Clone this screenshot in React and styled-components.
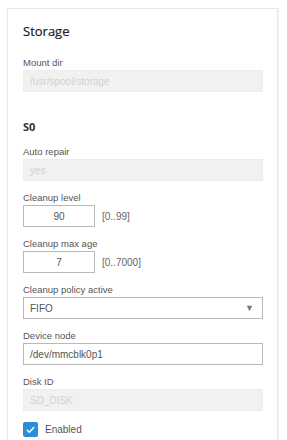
import React from 'react';
import styled, { createGlobalStyle } from 'styled-components';

const GlobalStyle = createGlobalStyle`
  body {
    margin: 0;
    background: #fff;
    font-family: "Liberation Sans", Arial, sans-serif;
  }
`;

const Page = styled.div`
  padding: 8px 9px 0 7px;
  height: 440px;
  box-sizing: border-box;
  overflow: hidden;
`;

const Card = styled.div`
  border: 1px solid #e6e6e6;
  border-bottom: none;
  box-shadow: 1px 0 0 #f2f2f2;
  padding: 13px 14px 0 15px;
  min-height: 440px;
  box-sizing: border-box;
`;

const Title = styled.h2`
  margin: 0 0 17px;
  font-family: "Open Sans", "Liberation Sans", sans-serif;
  font-size: 13px;
  font-weight: 400;
  line-height: 18px;
  color: #222;
  -webkit-text-stroke: 0.2px #222;
`;

const Section = styled.h3`
  margin: 28px 0 12px;
  font-family: "Open Sans", "Liberation Sans", sans-serif;
  font-size: 11px;
  font-weight: 700;
  line-height: 14px;
  color: #333;
`;

const Field = styled.div`
  margin-bottom: 11px;
`;

const Label = styled.div`
  font-size: 9.5px;
  line-height: 12px;
  color: #555;
  margin-bottom: 1px;
`;

const Row = styled.div`
  display: flex;
  align-items: center;
  gap: 7px;
`;

const Box = styled.div`
  height: 22px;
  box-sizing: border-box;
  width: ${p => (p.$short ? '72px' : '240px')};
  border: 1px solid ${p => (p.$disabled ? '#ececec' : '#b9b9b9')};
  background: ${p => (p.$disabled ? '#f1f1f1' : '#fff')};
  color: ${p => (p.$disabled ? '#d2d2d2' : '#555')};
  font-size: 10px;
  display: flex;
  align-items: center;
  justify-content: ${p => (p.$short ? 'center' : 'space-between')};
  padding: 0 ${p => (p.$short ? '0' : '6px')};
`;

const Range = styled.span`
  font-size: 10px;
  color: #666;
`;

const Arrow = styled.span`
  font-size: 9px;
  color: #777;
  margin-right: 2px;
`;

const CheckRow = styled.label`
  display: flex;
  align-items: center;
  gap: 7px;
  font-size: 10px;
  color: #555;
  margin-top: 1px;
`;

const Check = styled.span`
  width: 15px;
  height: 15px;
  border-radius: 2px;
  background: #2a8fd7;
  display: flex;
  align-items: center;
  justify-content: center;
`;

function TextField({ label, value, disabled }) {
  return (
    <Field>
      <Label>{label}</Label>
      <Box $disabled={disabled}>{value}</Box>
    </Field>
  );
}

function NumberField({ label, value, range }) {
  return (
    <Field>
      <Label>{label}</Label>
      <Row>
        <Box $short>{value}</Box>
        <Range>{range}</Range>
      </Row>
    </Field>
  );
}

export default function App() {
  return (
    <>
      <GlobalStyle />
      <Page>
        <Card>
          <Title>Storage</Title>
          <TextField label="Mount dir" value="/usr/spool/storage" disabled />
          <Section>S0</Section>
          <TextField label="Auto repair" value="yes" disabled />
          <NumberField label="Cleanup level" value="90" range="[0..99]" />
          <NumberField label="Cleanup max age" value="7" range="[0..7000]" />
          <Field>
            <Label>Cleanup policy active</Label>
            <Box>
              FIFO
              <Arrow>▼</Arrow>
            </Box>
          </Field>
          <TextField label="Device node" value="/dev/mmcblk0p1" />
          <TextField label="Disk ID" value="SD_DISK" disabled />
          <CheckRow>
            <Check>
              <svg width="11" height="11" viewBox="0 0 12 12">
                <path d="M2 6.2l2.7 2.7L10 3.4" fill="none" stroke="#fff" strokeWidth="1.6" />
              </svg>
            </Check>
            Enabled
          </CheckRow>
        </Card>
      </Page>
    </>
  );
}
